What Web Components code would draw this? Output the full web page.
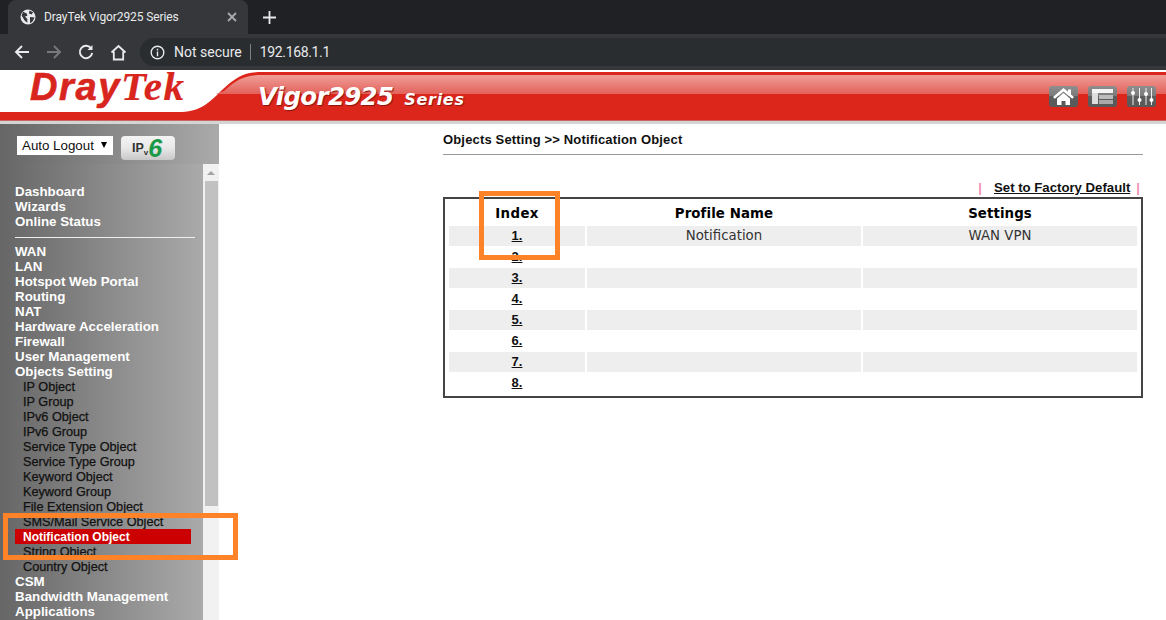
<!DOCTYPE html>
<html>
<head>
<meta charset="utf-8">
<title>DrayTek Vigor2925 Series</title>
<style>
  html, body { margin: 0; height: 100%; overflow: hidden; background: #fff; }
  body { display: flex; flex-direction: column; height: 620px; position: relative; }
</style>
</head>
<body>
<browser-bar></browser-bar>
<router-header></router-header>
<div id="page" style="display:grid;grid-template-columns:219px 1fr;flex:1;min-height:0">
  <side-menu></side-menu>
  <object-panel></object-panel>
</div>
<mark-box style="left:479px;top:191px;width:81px;height:69px"></mark-box>
<mark-box style="left:3px;top:513px;width:235px;height:47px"></mark-box>

<script>
class BrowserBar extends HTMLElement {
  constructor() {
    super();
    this.attachShadow({ mode: "open" });
  }

  static get styles() {
    return /* css */`
      :host {
        display: block;
        font-family: Roboto, "Liberation Sans", sans-serif;
        color: #e8eaed;
      }

      .strip {
        height: 34px;
        background: #202124;
        display: flex;
        align-items: flex-end;
        padding-left: 8px;
      }

      .tab {
        width: 240px;
        height: 34px;
        background: #35373a;
        border-radius: 8px 8px 0 0;
        display: flex;
        align-items: center;
        box-sizing: border-box;
        padding: 0 11px 0 12px;
        gap: 8px;
        font-size: 12px;
        letter-spacing: -0.1px;

        & span { flex: 1; }
      }

      .plus { margin: 0 0 0 15px; align-self: center; display: flex; }

      .tools {
        height: 36px;
        background: #35373a;
        display: flex;
        align-items: center;
        padding-left: 14px;
      }

      .nav { width: 32px; display: flex; }

      .omni {
        flex: 1;
        margin-left: -2px;
        height: 28px;
        background: #2a2d30;
        border-radius: 14px 0 0 14px;
        display: flex;
        align-items: center;
        padding-left: 10px;
        font-size: 14px;
        gap: 9px;
      }

      .sep { width: 1px; height: 16px; background: #7d7f83; margin-left: -1px; }
      .url { letter-spacing: -0.35px; }
    `;
  }

  connectedCallback() {
    this.shadowRoot.innerHTML = /* html */`
    <style>${BrowserBar.styles}</style>
    <div class="strip">
      <div class="tab">
        <svg width="16" height="16" viewBox="0 0 16 16"><circle cx="8" cy="8" r="7.5" fill="#e8eaed"/><path d="M3 2.8 6.8 4.6l.6 2.2-2.4.6L7.3 10v3.8L4.6 11.4 1.6 6.4zM9.4 1.6l3.6 1.6-1.2 2.4-2.8-1zM10 8l4.6.4-2.2 4.4-2.4 1.4z" fill="#35373a"/></svg>
        <span>DrayTek Vigor2925 Series</span>
        <svg width="10" height="10" viewBox="0 0 10 10"><path d="M1 1l8 8M9 1l-8 8" stroke="#a8abae" stroke-width="1.8"/></svg>
      </div>
      <div class="plus"><svg width="13" height="13" viewBox="0 0 13 13"><path d="M6.5 0v13M0 6.5h13" stroke="#e8eaed" stroke-width="1.8"/></svg></div>
    </div>
    <div class="tools">
      <div class="nav"><svg width="16" height="16" viewBox="0 0 16 16" fill="none" stroke="#e8eaed" stroke-width="1.9"><path d="M15 8H2M8 2 2 8l6 6"/></svg></div>
      <div class="nav"><svg width="16" height="16" viewBox="0 0 16 16" fill="none" stroke="#77797d" stroke-width="1.9"><path d="M1 8h13M8 2l6 6-6 6"/></svg></div>
      <div class="nav"><svg width="16" height="16" viewBox="0 0 16 16" fill="none" stroke="#e8eaed" stroke-width="1.9"><path d="M13.3 4.6A6.2 6.2 0 1 0 14.2 9"/><path d="M14.5 1v5h-5" fill="#e8eaed" stroke="none"/></svg></div>
      <div class="nav"><svg width="17" height="17" viewBox="0 0 17 17" fill="none" stroke="#e8eaed" stroke-width="1.8"><path d="M1.5 8.5 8.5 2l7 6.5M3.8 7.5v8h9.4v-8"/></svg></div>
      <div class="omni">
        <svg width="15" height="15" viewBox="0 0 15 15" fill="none" stroke="#e8eaed" stroke-width="1.4"><circle cx="7.5" cy="7.5" r="6.3"/><path d="M7.5 6.6v4.6M7.5 3.8v1.6"/></svg>
        <span>Not secure</span>
        <span class="sep"></span>
        <span class="url">192.168.1.1</span>
      </div>
    </div>`;
  }
}

class RouterHeader extends HTMLElement {
  constructor() {
    super();
    this.attachShadow({ mode: "open" });
  }

  static get styles() {
    return /* css */`
      :host {
        display: block;
        position: relative;
        height: 54px;
        background: #fff;
      }

      svg.art { position: absolute; left: 0; top: 0; }

      .row {
        position: relative;
        height: 100%;
        display: flex;
        align-items: flex-start;
      }

      .logo {
        font: italic bold 38px/33px "Liberation Sans", sans-serif;
        color: #d8261f;
        margin: 0 0 0 30px;
        width: 228px;
        letter-spacing: 1.6px;
        -webkit-text-stroke: 0.6px #d8261f;
        white-space: nowrap;

        & span { font-family: "Liberation Serif", serif; font-size: 41px; -webkit-text-stroke: 0.2px #d8261f; }
      }

      .model {
        font: italic bold 24.5px "DejaVu Sans", sans-serif;
        color: #fff;
        margin-top: 12px;
        letter-spacing: -0.7px;
        text-shadow: 1px 1px 1px #8a1510;
        white-space: nowrap;

        & small { font-size: 16px; margin-left: 11px; letter-spacing: 0.7px; }
      }

      .btns {
        margin: 16px 10px 0 auto;
        display: flex;
        gap: 10px;
      }

      .btn {
        width: 29px;
        height: 21px;
        border-radius: 3px;
        background: linear-gradient(#8e8e8e, #7a7a7a 48%, #5e5e5e 50%, #585858);
        display: grid;
        place-items: center;
      }
    `;
  }

  connectedCallback() {
    this.shadowRoot.innerHTML = /* html */`
    <style>${RouterHeader.styles}</style>
    <svg class="art" width="1166" height="54" viewBox="0 0 1166 54">
      <defs>
        <linearGradient id="gl" x1="0" y1="0" x2="0" y2="1">
          <stop offset="0" stop-color="#f09e98"/>
          <stop offset="1" stop-color="#e2625b"/>
        </linearGradient>
      </defs>
      <path d="M0 42H178C200 42 208 34 222 20C236 7 244 2 262 2H1166V50H0Z" fill="#dc261c"/>
      <path d="M224 21C237 9 245 5 262 5H1166V24H216Z" fill="url(#gl)"/>
      <rect y="50" width="1166" height="1" fill="#c9665f"/>
      <rect y="51" width="1166" height="3" fill="#d4d4d4"/>
    </svg>
    <div class="row">
      <div class="logo">Dray<span>Tek</span></div>
      <div class="model">Vigor2925<small>Series</small></div>
      <div class="btns">
        <div class="btn"><svg width="23" height="19" viewBox="0 0 23 19"><path d="M1 10 11.5 1l4.5 3.8V2.5h3v4.9L22 10l-1.8 1.8-8.7-7.4-8.7 7.4z" fill="#fff"/><path d="M5 11.5 11.5 6l6.5 5.5V18h-4.5v-4h-4v4H5z" fill="#fff"/></svg></div>
        <div class="btn"><svg width="23" height="17" viewBox="0 0 23 17"><path d="M1 1h21v4H1z" fill="#f4f4f4"/><path d="M1 5h6v11H1z" fill="#ddd"/><path d="M8 7h14v4H8z" fill="#bbb"/><path d="M8 12h14v4H8z" fill="#aaa"/></svg></div>
        <div class="btn"><svg width="25" height="19" viewBox="0 0 25 19"><path d="M4 1v17M10.500 1v17M17 1v17M22.500 1v17" stroke="#eee" stroke-width="1"/><circle cx="4" cy="6" r="2" fill="#fff"/><circle cx="10.500" cy="13" r="2" fill="#fff"/><circle cx="17" cy="7" r="2" fill="#fff"/><circle cx="22.500" cy="13" r="2" fill="#fff"/></svg></div>
      </div>
    </div>`;
  }
}

class SideMenu extends HTMLElement {
  constructor() {
    super();
    this.attachShadow({ mode: "open" });
  }

  static get styles() {
    return /* css */`
      :host {
        display: grid;
        grid-template-rows: 40px 1fr;
        min-height: 0;
        overflow: hidden;
        font-family: "Liberation Sans", Arial, sans-serif;
      }

      .top {
        background: linear-gradient(90deg, #666, #aaa);
        display: flex;
        align-items: flex-start;
        padding: 12px 0 0 17px;
        gap: 8px;
      }

      .select {
        width: 96px;
        height: 19px;
        background: #fff;
        box-sizing: border-box;
        font-size: 13.33px;
        line-height: 19px;
        padding-left: 5px;
        color: #111;
        position: relative;
      }

      .select::after {
        content: "";
        position: absolute;
        right: 6px;
        top: 6px;
        border: 3px solid transparent;
        border-top: 6px solid #000;
        border-bottom: 0;
      }

      .ipv6 {
        width: 54px;
        height: 24px;
        border-radius: 4px;
        background: linear-gradient(#f4f4f4, #e8e8e8 50%, #c8c8c8);
        display: flex;
        justify-content: center;
        align-items: center;
        font-size: 12.5px;
        font-weight: bold;
        color: #333;

        & i { font: italic bold 25px/20px "Liberation Sans", sans-serif; color: #1a9a46; margin-right: 2px; }
        & sub { font-size: 8px; vertical-align: -3px; line-height: 0; }
      }

      .body {
        display: grid;
        grid-template-columns: 203px 16px;
        min-height: 0;
      }

      nav {
        background: linear-gradient(90deg, #666, #aaa);
        padding: 20px 8px 0 15px;
        overflow: hidden;
      }

      hr {
        border: 0;
        height: 1px;
        background: #eee;
        width: 180px;
        margin: 8px 0 6px;
      }

      .bar {
        background: #f1f1f1;
        display: flex;
        flex-direction: column;
        align-items: center;
      }

      .arrow {
        margin-top: 7px;
        border: 4px solid transparent;
        border-top: 0;
        border-bottom: 4px solid #a3a3a3;
      }

      .thumb {
        margin-top: 6px;
        width: 13px;
        height: 325px;
        background: #c1c1c1;
      }
    `;
  }

  connectedCallback() {
    const top1 = ["Dashboard", "Wizards", "Online Status"];
    const top2 = ["WAN", "LAN", "Hotspot Web Portal", "Routing", "NAT", "Hardware Acceleration", "Firewall", "User Management", "Objects Setting"];
    const subs = ["IP Object", "IP Group", "IPv6 Object", "IPv6 Group", "Service Type Object", "Service Type Group", "Keyword Object", "Keyword Group", "File Extension Object", "SMS/Mail Service Object", "Notification Object", "String Object", "Country Object"];
    const top3 = ["CSM", "Bandwidth Management", "Applications"];
    const item = (t) => `<menu-item>${t}</menu-item>`;
    const sub = (t) => `<menu-item sub ${t === "Notification Object" ? "active" : ""}>${t}</menu-item>`;
    this.shadowRoot.innerHTML = /* html */`
    <style>${SideMenu.styles}</style>
    <div class="top">
      <div class="select">Auto Logout</div>
      <div class="ipv6"><span>IP<sub>v</sub></span><i>6</i></div>
    </div>
    <div class="body">
      <nav>
        ${top1.map(item).join("")}
        <hr>
        ${top2.map(item).join("")}
        ${subs.map(sub).join("")}
        ${top3.map(item).join("")}
      </nav>
      <div class="bar"><div class="arrow"></div><div class="thumb"></div></div>
    </div>`;
  }
}

class MenuItem extends HTMLElement {
  constructor() {
    super();
    this.attachShadow({ mode: "open" });
  }

  static get styles() {
    return /* css */`
      :host {
        display: block;
        height: 15px;
        line-height: 15px;
        font-size: 13.33px;
        font-weight: bold;
        color: #fff;
        white-space: nowrap;
      }

      :host([sub]) {
        font-size: 12.7px;
        font-weight: normal;
        -webkit-text-stroke: 0.25px #111;
        line-height: 16px;
        color: #111;
        padding-left: 8px;
      }

      :host([active]) {
        background: #cc0000;
        color: #fff;
        font-size: 12px;
        font-weight: bold;
        -webkit-text-stroke: 0;
        line-height: 16px;
        width: 168px;
      }
    `;
  }

  connectedCallback() {
    this.shadowRoot.innerHTML = `<style>${MenuItem.styles}</style><slot></slot>`;
  }
}

class ObjectPanel extends HTMLElement {
  constructor() {
    super();
    this.attachShadow({ mode: "open" });
  }

  static get styles() {
    return /* css */`
      :host {
        display: block;
        padding: 6px 23px 0 224px;
        color: #111;
      }

      h1 {
        margin: 0;
        font: bold 13px/20px "Liberation Sans", sans-serif;
        height: 24px;
        border-bottom: 1px solid #999;
        letter-spacing: 0.16px;
      }

      .links {
        text-align: right;
        font: bold 13.2px/18px "Liberation Sans", sans-serif;
        margin-top: 24px;
        height: 18px;
        padding-right: 3px;

        & u { margin: 0 6px 0 12px; }
        & b { color: #f090b8; font-weight: bold; }
      }

      .table {
        border: 2px solid #444;
        padding: 6px 4px 4px;
        height: 201px;
        box-sizing: border-box;
        display: grid;
        grid-template-columns: 136px 274px 274px;
        column-gap: 2px;
        grid-auto-rows: 21px;
        font: 13.33px/20px "DejaVu Sans", sans-serif;
        text-align: center;
      }

      .head { font-weight: bold; height: 16px; line-height: 18px; margin-bottom: -1px; letter-spacing: 0.1px; color: #000; }
      .head.first { letter-spacing: 0.4px; }
      .table > div { height: 20px; }
      .alt { background: #eee; color: #333; }
      .idx { font: bold 13px/20px "Liberation Sans", sans-serif; text-decoration: underline; color: #111; }
    `;
  }

  connectedCallback() {
    let rows = "";
    for (let i = 1; i <= 8; i++) {
      const alt = i % 2 ? "alt" : "";
      rows += `<div class="${alt} idx">${i}.</div>`;
      rows += `<div class="${alt}">${i === 1 ? "Notification" : ""}</div>`;
      rows += `<div class="${alt}">${i === 1 ? "WAN VPN" : ""}</div>`;
    }
    this.shadowRoot.innerHTML = /* html */`
    <style>${ObjectPanel.styles}</style>
    <h1>Objects Setting &gt;&gt; Notification Object</h1>
    <div class="links"><b>|</b><u>Set to Factory Default</u><b>|</b></div>
    <div class="table">
      <div class="head first">Index</div><div class="head">Profile Name</div><div class="head">Settings</div>
      ${rows}
    </div>`;
  }
}

class MarkBox extends HTMLElement {
  constructor() {
    super();
    this.attachShadow({ mode: "open" });
  }

  connectedCallback() {
    this.shadowRoot.innerHTML = `<style>:host { display: block; position: absolute; box-sizing: border-box; border: 5px solid #fd8228; }</style>`;
  }
}

customElements.define("menu-item", MenuItem);
customElements.define("side-menu", SideMenu);
customElements.define("browser-bar", BrowserBar);
customElements.define("router-header", RouterHeader);
customElements.define("object-panel", ObjectPanel);
customElements.define("mark-box", MarkBox);
</script>
</body>
</html>
